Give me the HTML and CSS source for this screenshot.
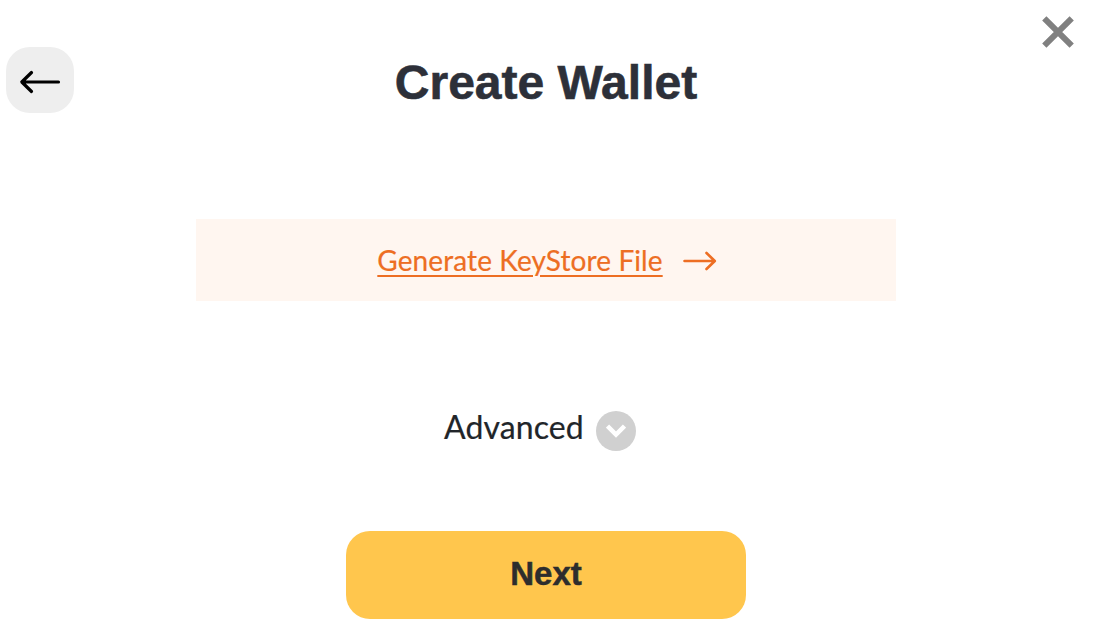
FILE: index.html
```
<!DOCTYPE html>
<html lang="en">

<head>
    <meta charset="UTF-8">
    <title>Create Wallet</title>
    <link rel="stylesheet" href="styles.css">
</head>

<body>
    <div class="wallet">
        <header class="header">
            <button class="back" type="button" aria-label="Back">
                <svg width="42" height="26" viewBox="0 0 42 26">
                    <path d="M39.5 13H3M12.5 3.5L2.8 13l9.7 9.5" />
                </svg>
            </button>
            <h1>Create Wallet</h1>
            <button class="close" type="button" aria-label="Close">
                <svg width="32" height="32" viewBox="0 0 32 32">
                    <path d="M2.3 2.3l27.4 27.4M29.7 2.3L2.3 29.7" />
                </svg>
            </button>
        </header>

        <div class="keystore">
            <a href="#">Generate KeyStore File</a>
            <svg width="34" height="20" viewBox="0 0 34 20">
                <path d="M1.5 10H31.5M23.5 2l8.3 8-8.3 8" />
            </svg>
        </div>

        <div class="advanced">
            <span>Advanced</span>
            <span class="toggle">
                <svg width="20" height="14" viewBox="0 0 20 14">
                    <path d="M1.5 2l8.5 8.5L18.5 2" />
                </svg>
            </span>
        </div>

        <button class="next" type="button">Next</button>
    </div>
</body>

</html>
```

FILE: styles.css
```
body {
    margin: 0;
    background-color: #fff;
    font-family: Lato, sans-serif;
    color: #212529;
    overflow: hidden;
}

button {
    padding: 0;
    border: none;
    background: none;
    cursor: pointer;
}

svg {
    display: block;
    fill: none;
}

.wallet {
    width: 1092px;
    display: flex;
    flex-direction: column;
    align-items: center;
}

.header {
    width: 100%;
    height: 219px;
    display: grid;
    grid-template-columns: 1fr auto 1fr;
    align-items: start;
}

.back {
    width: 68px;
    height: 66px;
    margin: 47px 0 0 6px;
    padding: 4px 0 0;
    border-radius: 24px;
    background-color: #eee;
    display: flex;
    justify-content: center;
    align-items: center;
}

.back svg {
    stroke: #000;
    stroke-width: 3.2;
    stroke-linecap: round;
    stroke-linejoin: round;
}

h1 {
    margin: 55px 0 0;
    font-family: "Liberation Sans", Helvetica, sans-serif;
    font-size: 48px;
    line-height: 56px;
    font-weight: bold;
    color: #2d3039;
    -webkit-text-stroke: 0.6px #2d3039;
}

.close {
    justify-self: end;
    margin: 16px 18px 0 0;
}

.close svg {
    stroke: #808080;
    stroke-width: 6;
}

.keystore {
    box-sizing: border-box;
    width: 700px;
    height: 82px;
    padding-left: 2px;
    display: flex;
    justify-content: center;
    align-items: center;
    gap: 20px;
    background-color: #fff6f0;
}

.keystore a {
    font-size: 28px;
    letter-spacing: 0.1px;
    color: #ed6e23;
    text-decoration-thickness: 2px;
    text-underline-offset: 4px;
    -webkit-text-stroke: 0.2px #ed6e23;
}

.keystore svg {
    margin-top: 2px;
    stroke: #ed6e23;
    stroke-width: 2.6;
    stroke-linecap: round;
    stroke-linejoin: round;
}

.advanced {
    height: 40px;
    margin: 110px 12px 0 0;
    display: flex;
    gap: 12px;
    font-size: 32px;
    line-height: 32px;
    letter-spacing: 0.1px;
    -webkit-text-stroke: 0.2px #212529;
}

.toggle {
    width: 40px;
    height: 40px;
    border-radius: 50%;
    background-color: #d0d0d0;
    display: flex;
    justify-content: center;
    align-items: center;
}

.toggle svg {
    stroke: #fff;
    stroke-width: 4.5;
}

.next {
    width: 400px;
    height: 88px;
    margin-top: 80px;
    padding-bottom: 2px;
    border-radius: 24px;
    background-color: #ffc64d;
    font-family: "Liberation Sans", Helvetica, sans-serif;
    font-size: 33px;
    font-weight: bold;
    color: #2d2d2d;
    -webkit-text-stroke: 0.5px #2d2d2d;
}
```
